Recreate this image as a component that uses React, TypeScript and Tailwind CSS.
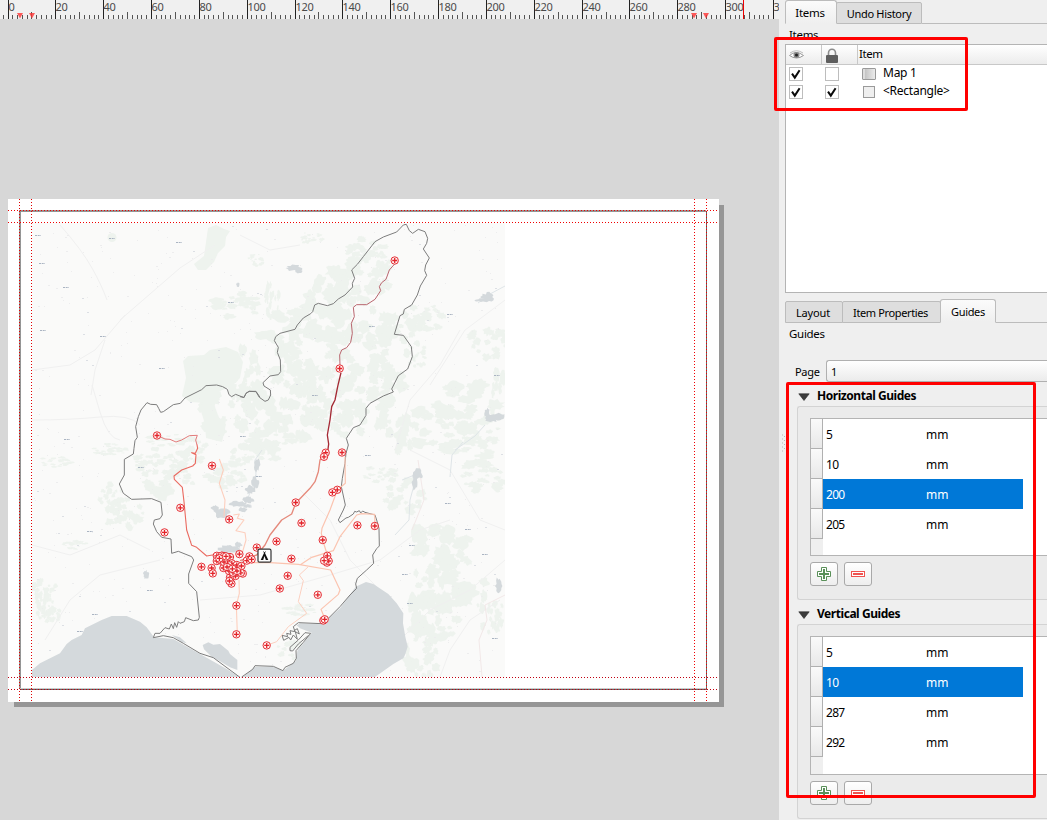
import React from "react";

/* ---------- ruler ---------- */

const MM = 2.392;

function Ruler() {
  const ticks: React.ReactNode[] = [];
  for (let mm = -2; mm <= 320; mm += 2) {
    const x = Math.floor(8 + mm * MM) + 0.5;
    const top = mm % 20 === 0 ? 0 : mm % 10 === 0 ? 12 : 15;
    ticks.push(<line key={mm} x1={x} x2={x} y1={top} y2={19} stroke={mm % 20 === 0 ? "#222" : "#555"} />);
  }
  const labels = Array.from({ length: 17 }, (_, i) => i * 20);
  return (
    <svg className="block h-[19px] w-[779px] shrink-0 bg-[#f0f0f0]" viewBox="0 0 779 19">
      {ticks}
      {labels.map((v) => (
        <text key={v} x={Math.floor(8 + v * MM) + 0.6} y={11} fontSize="11" letterSpacing="-0.35" fill="#4a4a4a" className="font-['Noto_Sans',sans-serif]">
          {v === 320 ? "3" : v}
        </text>
      ))}
      {[20, 32, 694, 706].map((x) => (
        <path key={x} d={`M${x - 3} 13h6l-3 5.5z`} fill="#f33" fillOpacity="0.8" />
      ))}
      <path d="M743 0h1v19h-1z" fill="#e00" />
    </svg>
  );
}

/* ---------- map ---------- */

function seeded(seed: number) {
  let s = seed;
  return () => {
    s = (s * 16807) % 2147483647;
    return s / 2147483647;
  };
}

function ragged(cx: number, cy: number, rx: number, ry: number, seed: number) {
  const rnd = seeded(seed * 7919 + 13);
  const n = 18;
  const pts: string[] = [];
  for (let i = 0; i < n; i++) {
    const a = (i / n) * Math.PI * 2;
    const k = 0.6 + rnd() * 0.55;
    pts.push(`${(cx + Math.cos(a) * rx * k).toFixed(1)},${(cy + Math.sin(a) * ry * k).toFixed(1)}`);
  }
  return pts.join(" ");
}

/* A wood is a scatter of small patches inside its ellipse. */
function patches([x, y, rx, ry]: number[], seed: number) {
  const rnd = seeded(seed * 104729 + 7);
  rnd();
  return Array.from({ length: 24 }, (_, i) => {
    const a = rnd() * Math.PI * 2;
    const d = Math.sqrt(rnd()) * 1.05;
    const k = 0.1 + rnd() * 0.2;
    return ragged(x + Math.cos(a) * rx * d, y + Math.sin(a) * ry * d, rx * k, ry * k, seed * 30 + i);
  });
}

const woods: number[][] = [
  [236, 305, 24, 12], [225, 410, 26, 28], [245, 380, 18, 30], [262, 420, 24, 32], [300, 330, 42, 24],
  [330, 320, 34, 34], [345, 290, 26, 22], [372, 272, 24, 20], [370, 250, 22, 14], [310, 238, 12, 6],
  [272, 300, 7, 18], [290, 360, 26, 26], [360, 350, 34, 30], [385, 330, 26, 24], [372, 385, 30, 26],
  [330, 395, 30, 30], [300, 410, 30, 26], [270, 445, 26, 14], [350, 420, 22, 20], [425, 320, 20, 14],
  [415, 355, 12, 12], [500, 395, 10, 24], [465, 400, 32, 20], [440, 425, 34, 22], [480, 432, 24, 14],
  [400, 425, 20, 26], [405, 495, 20, 16], [380, 475, 16, 8], [468, 455, 30, 14], [485, 480, 22, 12],
  [55, 462, 16, 5], [110, 450, 16, 6], [125, 515, 18, 16], [112, 498, 12, 14], [170, 480, 26, 18],
  [155, 460, 20, 12], [195, 450, 18, 12], [45, 590, 12, 12], [50, 615, 10, 10], [75, 545, 12, 4],
  [165, 440, 20, 6], [225, 475, 20, 12], [245, 455, 14, 10], [300, 610, 16, 6], [290, 650, 12, 10],
  [255, 260, 8, 6], [45, 605, 9, 14], [420, 655, 20, 22], [490, 612, 12, 20], [488, 342, 18, 16],
  [440, 550, 34, 26], [450, 585, 36, 30], [425, 600, 20, 34], [435, 625, 24, 16],
];

const solidWoods = [
  "208,228 216,225 224,229 230,231 226,237 225,246 218,253 214,262 206,270 198,270 194,264 204,256 206,242",
  "183,361 188,356 204,355 210,350 226,347 238,352 243,362 240,378 232,386 220,391 205,403 190,402 182,396 186,378",
  "199,405 214,404 219,418 226,424 222,442 206,438 205,424",
];

const waters: number[][] = [
  [222, 513, 9, 6], [215, 508, 4, 3], [238, 504, 9, 3], [248, 500, 6, 4], [228, 549, 12, 4],
  [222, 555, 8, 4], [238, 545, 4, 3], [488, 297, 7, 5], [482, 300, 7, 2], [492, 418, 8, 4],
  [487, 413, 3, 5], [500, 417, 6, 4], [417, 474, 6, 6], [415, 482, 3, 9], [499, 586, 4, 9], [294, 268, 9, 3],
  [299, 271, 4, 3], [238, 285, 2, 3], [146, 575, 3, 5], [243, 510, 4, 3], [250, 490, 5, 5],
  [255, 483, 4, 7], [257, 465, 3, 7], [247, 506, 5, 2],
];

const zoneOutlines = [
  {
    t: "translate(0 190) scale(.33333)",
    d: "M405 752L412 742 407 710 415 680 423 660 441 638 452 643 470 644 476 655 482 667 490 665 520 644 541 640 555 624 605 599 618 587 650 585 668 590 682 598 687 614 695 620 707 613 732 623 738 610 747 604 768 604 780 622",
  },
  {
    t: "translate(240 190) scale(.33333)",
    d: "M0 620L12 622 18 610 28 604 48 605 58 622 75 634 85 630 92 615 91 600 72 588 69 578 90 558 115 554 122 545 121 510 112 487 115 472 103 452 107 440 120 430 165 418 172 405 190 384 212 371 218 365 224 345 235 340 262 347 280 341 295 327 315 315 338 291 337 280 344 265 335 240 352 223 370 200 405 155 430 141 470 126 490 105 499 103 508 122 518 130 535 118 555 125 563 145 560 160 550 177 568 204 557 225 554 242 560 256 541 288 532 315 515 345 493 358 490 372 480 377 463 433 490 436 500 450 514 470 517 500 503 537 475 557 455 597 460 606 430 618 390 640 378 655 378 676 360 705 340 713 319 745",
  },
  {
    t: "translate(0 440) scale(.33333)",
    d: "M405 2L402 25 400 42 373 58 373 105 358 132 370 160 395 178 455 176 483 187 487 225 480 236 463 240 460 252 470 275 485 292 513 297 515 340 535 334 575 350 581 360 566 402 566 430 590 455 598 532 595 540 580 542 557 533 553 545 540 550 535 545 530 562 524 548 520 566 514 552 508 567 495 563 480 580 465 580 460 593 490 587 520 593 550 610 600 640 640 653 690 690 720 712",
  },
  {
    t: "translate(240 440) scale(.33333)",
    d: "M5 711L38 688 45 677 100 679 129 692 135 682 160 670 169 655 168 632 190 607 212 580 195 578 175 600 150 622 150 632 158 633 175 612 206 586M165 575L160 560 175 548 245 551 265 535 300 500 330 465 350 445 347 432 352 415 380 390 401 370 398 345 410 326 418 318 417 265 410 240 405 225 375 217 368 213 362 219 358 212 350 216 344 214 340 222 325 232 318 234 300 248 295 240 310 210 316 195 304 140 307 115 315 70 318 40 325 15 319 -5M165 575L150 572 153 583 140 580 143 590 126 586 131 601 147 592 152 600 160 585 172 598 166 575 178 582 172 566 162 572",
  },
];

const routes = [
  { t: "translate(0 190) scale(.33333)", c: "#e27b7b", w: 3, d: "M471 736L495 747 510 748 528 756 545 750 568 737 592 736 587 750 591 765" },
  { t: "translate(0 440) scale(.33333)", c: "#ea6a60", w: 3.3, d: "M591 14L593 25 586 40 575 38 588 44 586 70 578 78 545 90 522 108 523 118 547 142 552 185 560 270 575 316 590 322 620 348 650 343" },
  { t: "translate(240 190) scale(.33333)", c: "#b9656e", w: 3, d: "M464 222L448 240 438 268 425 278 418 290 422 302 405 328 380 344 350 344 340 352 343 380 334 400 337 430 332 457 320 473 305 480 299 495 300 525" },
  { t: "translate(240 190) scale(.33333)", c: "#a52a35", w: 4, d: "M303 548L293 590 285 630 275 650 270 690 262 735 266 762 263 785" },
  { t: "translate(240 440) scale(.33333)", c: "#e5897b", w: 4, d: "M262 34L240 60 235 95 225 125 210 145 167 190 155 222 125 240 90 285 75 315 50 345 0 362" },
  { t: "translate(240 440) scale(.33333)", c: "#fbc4b0", w: 3.6, d: "M315 50L316 130 292 150 270 210 246 265 244 280 248 300 262 345M30 368L90 368 175 373 272 390 282 412 300 450 295 463 243 508 254 535M180 375L215 352 280 332 300 290 350 225 365 221 404 223 405 255" },
  { t: "translate(240 440) scale(.33333)", c: "#fcd0c0", w: 3, d: "M205 380L178 405 190 422 175 485 200 520 145 560 110 605 80 616" },
  { t: "translate(0 440) scale(.33333)", c: "#fdcfbe", w: 3.3, d: "M658 57L670 90 658 130 675 180 672 230M700 225L718 222 712 235 732 240 708 272 735 278 738 300 725 345M717 420L718 460 709 496 712 582" },
];

const stops: number[][] = [
  [157, 435.5], [394.7, 260.5], [339.7, 368.5], [212, 465.7], [180.3, 507.8], [229.2, 519.4], [164.5, 532.4],
  [201.4, 566.8], [211.6, 568], [212.8, 573.4], [239.4, 554.1], [256.8, 547.6], [249.4, 556.4], [246.8, 560.6],
  [236.4, 605.6], [236.4, 634.3], [216.8, 555.8], [221.8, 555.6], [216.8, 561], [230, 557], [224, 556],
  [223.4, 568], [231.8, 563.4], [239, 568], [242.8, 573.6], [235.5, 576], [230, 577.4], [221, 560.5],
  [231.4, 583.6], [229.4, 581], [240.8, 572.8], [228.4, 565], [236.8, 565], [224, 562], [219.4, 558.4],
  [241.4, 566], [251.6, 559.4], [229, 571], [233, 572.6], [237, 571], [227, 567], [226, 556.4], [232.4, 568.8],
  [325.7, 452.7], [324, 456.8], [342, 452.5], [337.3, 489.8],
  [332.4, 492.4], [295.7, 502.5], [301.5, 523], [276.5, 541.4], [357.4, 525.3], [374.8, 526], [322.7, 540],
  [327, 562.6], [328.7, 561], [327.3, 555.8], [324.1, 560.7], [291.4, 558.7], [287.7, 575.8], [279.8, 588.5],
  [317.8, 594.8], [323.3, 620.5], [324.7, 619.3], [266.7, 645.4],
];

const placeNames: number[][] = [
  [35, 238], [109, 241], [176, 245], [39, 266], [63, 290], [228, 305], [40, 333], [100, 339], [159, 371],
  [64, 442], [87, 534], [92, 617], [77, 634], [240, 439], [369, 329], [447, 317], [494, 378], [312, 398],
  [138, 470], [256, 479], [365, 458], [445, 506], [465, 532], [409, 548], [482, 557], [402, 577], [407, 606],
  [492, 641], [147, 593],
];

function BaseMap() {
  const rnd = seeded(4242);
  const specks = Array.from({ length: 650 }, () => [34 + rnd() * 468, 225 + rnd() * 448, rnd()]);
  return (
    <>
      <clipPath id="frame"><rect x="32" y="223" width="473" height="454" /></clipPath>
      <g clipPath="url(#frame)">
        <rect x="32" y="223" width="473" height="454" fill="#fafaf9" />
        <g fill="#eef3ee">
          {woods.flatMap((w, i) => patches(w, i + 1).map((p, j) => <polygon key={`${i}-${j}`} points={p} />))}
          {solidWoods.map((p, i) => (
            <polygon key={i} points={p} />
          ))}
          <circle cx="112" cy="237.500" r="4.500" />
        </g>
        <g fill="none" stroke="#f0f0f0" strokeWidth="1">
          <path d="M60 225Q82 250 92 268T107 300M92 385T100 412T120 440M32 420Q70 420 100 417T140 425M120 320L180 268 215 245M105 340L95 370 91 395M32 370L70 365 95 350 125 315M32 545L70 555 120 535 150 550M45 640L70 600 100 575 160 560M240 235L270 250 300 245M400 640L430 610 470 590 505 560M460 330L440 365 410 400 395 450M505 300L465 330 430 385M410 450L450 470 480 520 505 530" />
          <path d="M200 600L260 595 330 575 380 560 420 530 450 520M380 590L350 560 330 520 300 490M440 677L450 650 470 620 500 600" />
        </g>
        <path d="M482 677L479 640 487 620 485 605 505 595M418 460L424 500 412 530" fill="none" stroke="#f2e8e8" />
        <g fill="none" stroke="#dfe5e8" strokeWidth="1">
          <path d="M240 506L248 498 252 487 256 475 255 460 262 450M402 480L417 474 410 500 409 520 395 535M455 450L475 436 485 425M450 477L452 455 463 442M505 286L490 294 478 303" />
        </g>
        {specks.map(([x, y, k], i) => (
          <rect key={i} x={Math.round(x)} y={Math.round(y)} width={k > 0.7 ? 2 : 1} height="1" fill={k > 0.9 ? "#dcdfe4" : "#ededee"} />
        ))}
        <g fill="#d4d9dc">
          <path transform="translate(0 440) scale(.33333)" d="M96 711V690L120 670 180 640 200 612 215 600 245 585 255 565 305 540 335 528 380 528 420 545 440 562 462 592 520 597 600 642 680 687 718 711Z" />
          <path transform="translate(240 440) scale(.33333)" d="M8 711L45 680 100 680 129 692 168 662 172 632 215 578 180 565 170 556 180 550 245 553 300 505 347 440 378 426 400 432 445 462 470 490 490 520 489 550 496 590 503 620 495 645 490 655 460 672 405 711Z" />
          <path transform="translate(0 440) scale(.33333)" d="M608 615L625 607 640 614 660 612 685 632 690 642 712 660 712 690 690 682 660 664 635 650 612 628ZM515 585L540 592 560 610 545 606Z" />
          {waters.map(([x, y, rx, ry], i) => (
            <polygon key={i} points={ragged(x, y, rx, ry, i + 90)} />
          ))}
        </g>
        {placeNames.map(([x, y], i) => (
          <line key={i} x1={x} x2={x + 6} y1={y - 2.5} y2={y - 2.5} stroke="#aab4c2" strokeDasharray="2 .7" />
        ))}
      </g>
    </>
  );
}

function Stop({ x, y }: { x: number; y: number }) {
  return (
    <g transform={`translate(${x} ${y})`} stroke="#e3242b">
      <circle r="3.700" fill="#fff5f3" strokeWidth="0.95" />
      <path d="M-2.500 0H2.500M0-2.500V2.500" strokeWidth="1.300" />
    </g>
  );
}

function LayoutPage() {
  return (
    <svg className="block h-[503px] w-[711px] bg-white shadow-[5.5px_5.5px_0_-0.5px_#969696]" viewBox="8 199 711 503">
      <BaseMap />
      <g fill="none" strokeLinejoin="round">
        {zoneOutlines.map((o, i) => (
          <path key={i} transform={o.t} d={o.d} stroke="#7c7c7c" strokeWidth="3" />
        ))}
        {routes.map((r, i) => (
          <path key={i} transform={r.t} d={r.d} stroke={r.c} strokeWidth={r.w} />
        ))}
      </g>
      {stops.map(([x, y], i) => (
        <Stop key={i} x={x} y={y} />
      ))}
      <rect x="258" y="549.200" width="13" height="13" rx="1.500" fill="#fff" stroke="#333" strokeWidth="1.200" />
      <path d="M264.500 552L268.300 560H260.700Z" fill="#111" />
      <path d="M264.500 556L265.900 560.200H263.100Z" fill="#fff" />
      <path d="M263.500 551.500L264.500 553L265.500 551.500" fill="none" stroke="#111" strokeWidth=".8" />
      <path d="M19 211H706" stroke="#959595" strokeWidth="2" />
      <path d="M20 210V689" stroke="#959595" strokeWidth="2" />
      <path d="M706.500 211V689M20 689.500H707" stroke="#666" strokeWidth="1" />
      <path d="M20 688.500H707" stroke="#ccc" strokeWidth="1" />
      <g strokeDasharray="1 2" strokeWidth="1">
        <path d="M8 210.500H719M8 222.500H719" stroke="#f00000" />
        <path d="M8 677.500H719M8 689.500H719" stroke="#c00010" />
        <path d="M19.500 199V702M31.500 199V702" stroke="#e00000" />
        <path d="M694.500 199V702M706.500 199V702" stroke="#f00000" />
      </g>
    </svg>
  );
}

/* ---------- side panel ---------- */

function Check({ on }: { on: boolean }) {
  return (
    <span className="block size-[14px] border border-[#bdbdbd] bg-white">
      {on && (
        <svg viewBox="0 0 12 12" className="block size-3">
          <path d="M2 5.600L4.800 9.600 9.600 2.200" fill="none" stroke="#0a0a0a" strokeWidth="2" />
        </svg>
      )}
    </span>
  );
}

function Eye() {
  return (
    <svg viewBox="0 0 15 12" className="block h-3 w-[15px]">
      <path d="M.5 6.500Q7 .5 14.500 6.500Q7.500 11.500.5 6.500Z" fill="#fff" stroke="#999" />
      <path d="M1 4Q7.500-.5 14 4" fill="none" stroke="#b5b5b5" strokeWidth=".9" />
      <circle cx="7.500" cy="6" r="3" fill="#8a8a8a" />
      <circle cx="7.500" cy="6" r="1.500" fill="#222" />
    </svg>
  );
}

function Lock() {
  return (
    <svg viewBox="0 0 12 15" className="block h-[15px] w-3">
      <path d="M2.500 8V5a3.500 3.800 0 0 1 7 0V8" fill="none" stroke="#8c8c8c" strokeWidth="1.600" />
      <rect x="0" y="7" width="12" height="8" rx="1" fill="#5e5e5e" />
    </svg>
  );
}

function ItemRow({ name, locked, map }: { name: string; locked: boolean; map?: boolean }) {
  return (
    <div className="flex h-[18px] items-start">
      <div className="w-9 pl-[3px] pt-[2px]"><Check on /></div>
      <div className="w-9 pl-[3px] pt-[2px]"><Check on={locked} /></div>
      <div className="w-[25px] pl-1 pt-[3px]">
        {map ? (
          <span className="block h-3 w-[14px] rounded-[1px] border border-[#9a9a9a] bg-linear-to-r from-[#bcbcbc] to-[#ececec] shadow-[inset_2px_0_0_#ddd]" />
        ) : (
          <span className="ml-px block size-3 border border-[#9a9a9a] bg-[#efefef]" />
        )}
      </div>
      <span className="text-[12px] leading-4 tracking-[-0.25px]">{name}</span>
    </div>
  );
}

function GuideButton({ kind }: { kind: "add" | "remove" }) {
  return (
    <div className="flex h-6 w-7 items-center justify-center rounded-[3px] border border-[#a9a9a9] bg-linear-to-b from-white to-[#eeeeee]">
      <svg viewBox="0 0 14 14" className="block size-[14px]">
        {kind === "add" ? (
          <>
            <path d="M4.500 .5h5v4h4v5h-4v4h-5v-4h-4v-5h4z" fill="#fff" stroke="#5a9059" />
            <path d="M7 2v10M2 7h10" stroke="#5a9059" strokeWidth="2" />
          </>
        ) : (
          <>
            <rect x=".5" y="4.500" width="13" height="5" fill="#fff" stroke="#ef5350" />
            <path d="M2 7h10" stroke="#ef5350" strokeWidth="2" />
          </>
        )}
      </svg>
    </div>
  );
}

function GuideGroup({ title, values, selected, box, table }: { title: string; values: number[]; selected: number; box: string; table: string }) {
  return (
    <section>
      <div className="flex h-5 items-center">
        <svg viewBox="0 0 12 8" className="ml-px mt-[2px] block h-2 w-3">
          <path d="M.8 .8h10.400L6 7.500z" fill="#3c3c3c" stroke="#222" strokeWidth=".6" />
        </svg>
        <h3 className="ml-[7px] whitespace-nowrap pb-px text-[12px] font-bold leading-none tracking-[-0.45px]">{title}</h3>
      </div>
      <div className={`${box} rounded-l-[3px] border border-r-0 border-[#d3d3d3] bg-[#ebebeb] pl-3 pt-[11px]`}>
        <div className={`${table} flex flex-col border border-r-0 border-[#b4b4b4] bg-white`}>
          {values.map((v, i) => (
            <div key={v} className="flex h-[30px]">
              <span className="w-3 border-b border-r border-[#b0b0b0] bg-linear-to-b from-[#fafafa] to-[#e8e8e8]" />
              <div className={`flex w-[200px] items-center pt-px text-[12px] leading-none ${i === selected ? "bg-[#0078d7] text-white" : ""}`}>
                <span className="w-[103px] pl-[3px] tracking-[-0.7px]">{v}</span>
                <span>mm</span>
              </div>
            </div>
          ))}
          <span className="w-3 flex-1 bg-[#efefef]" />
        </div>
        <div className="mt-[6px] flex gap-[6px]">
          <GuideButton kind="add" />
          <GuideButton kind="remove" />
        </div>
      </div>
    </section>
  );
}

function Tab({ label, active, cls }: { label: string; active?: boolean; cls: string }) {
  return (
    <div
      className={`${cls} flex items-center justify-center whitespace-nowrap border border-[#bcbcbc] ${
        active ? "z-10 rounded-t-[3px] border-b-[#efefef] bg-linear-to-b from-[#fbfbfb] to-[#efefef]" : "rounded-t-[2px] bg-[#dedede]"
      }`}
    >
      {label}
    </div>
  );
}

function SidePanel() {
  return (
    <aside className="flex w-[268px] flex-col overflow-hidden bg-[#efefef] pl-[6px] text-[11px] text-black">
      <div className="flex h-6 shrink-0 items-end">
        <Tab label="Items" active cls="h-6 w-[52px] pt-[2px] pr-[2px] text-[11.5px] tracking-[-0.3px]" />
        <Tab label="Undo History" cls="h-[22px] w-[86px] -ml-px pt-[2px] tracking-[-0.3px]" />
        <span className="h-px flex-1 bg-[#bcbcbc]" />
      </div>
      <div className="h-5 shrink-0 overflow-hidden pl-1 pt-[3px] text-[11.5px] leading-[15px] tracking-[-0.3px]">Items</div>
      <div className="h-[249px] shrink-0 border border-r-0 border-[#b4b4b4] bg-white">
        <div className="flex h-5 border-b border-[#c8c8c8] bg-linear-to-b from-white to-[#ececec]">
          <span className="w-9 border-r border-[#c8c8c8] pl-[3px] pt-1"><Eye /></span>
          <span className="w-9 border-r border-[#c8c8c8] pl-1 pt-[3px]"><Lock /></span>
          <span className="pl-px text-[11.5px] leading-[18px] tracking-[-0.4px]">Item</span>
        </div>
        <ItemRow name="Map 1" locked={false} map />
        <ItemRow name="<Rectangle>" locked />
      </div>
      <div className="mt-[6px] flex h-6 shrink-0 items-end">
        <Tab label="Layout" cls="h-[22px] w-[58px] pt-[2px] pr-[2px] tracking-[-0.15px]" />
        <Tab label="Item Properties" cls="-ml-px h-[22px] w-[99px] pt-[2px] pr-[2px] tracking-[-0.37px]" />
        <Tab label="Guides" active cls="-ml-px h-6 w-[56px] pt-[2px] tracking-[-0.35px]" />
        <span className="h-px flex-1 bg-[#bcbcbc]" />
      </div>
      <div className="h-[37px] shrink-0 pl-1 pt-[3px] text-[11.5px] leading-[15px] tracking-[-0.3px]">Guides</div>
      <div className="flex h-[22px] shrink-0 items-center">
        <span className="w-[41px] pl-[10px] pt-[2px] tracking-[-0.3px]">Page</span>
        <span className="flex h-[22px] flex-1 items-center rounded-l-[3px] border border-r-0 border-[#b0b0b0] bg-linear-to-b from-white to-[#ebebeb] pl-1 pt-[2px]">1</span>
      </div>
      <div className="flex flex-col pl-3 pt-1">
        <GuideGroup title="Horizontal Guides" values={[5, 10, 200, 205]} selected={2} box="h-[194px]" table="h-[138px]" />
        <div className="h-1" />
        <GuideGroup title="Vertical Guides" values={[5, 10, 287, 292]} selected={1} box="h-[195px]" table="h-[139px]" />
      </div>
    </aside>
  );
}

export default function App() {
  return (
    <div className="relative flex h-[820px] w-[1047px] overflow-hidden bg-[#d7d7d7] font-['Noto_Sans',sans-serif]">
      <main className="flex w-[779px] flex-col">
        <Ruler />
        <div className="pl-2 pt-[180px]">
          <LayoutPage />
        </div>
      </main>
      <SidePanel />
      <svg viewBox="0 0 3 18" className="absolute left-[782px] top-[434px] h-[18px] w-[3px]">
        <path d="M.5 .5V18M2.500 2V18" stroke="#b5b5b5" strokeDasharray="1 3" />
      </svg>
      <div className="absolute left-[774px] top-[37px] h-[74px] w-[194px] rounded-[2px] border-3 border-[#ff0000]" />
      <div className="absolute left-[786px] top-[382px] h-[416px] w-[250px] rounded-[2px] border-3 border-[#ff0000]" />
    </div>
  );
}
